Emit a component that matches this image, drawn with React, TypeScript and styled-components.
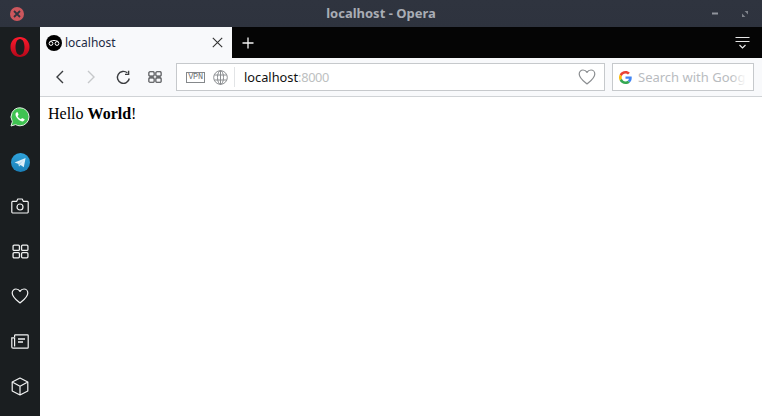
import React from "react";
import styled, { createGlobalStyle } from "styled-components";

const Global = createGlobalStyle`
  html, body { margin: 0; padding: 0; background: #fff; overflow: hidden; }
  #root { width: 762px; height: 416px; }
`;
const Win = styled.div`
  width: 762px; height: 416px; display: flex; flex-direction: column; overflow: hidden;
`;
const TitleBar = styled.header`
  height: 27px; flex: none; display: flex; align-items: center; justify-content: space-between;
  padding: 0 14px 0 10px; background: linear-gradient(#2f343f, #2e333e);
  position: relative;
`;
const TitleText = styled.div`
  position: absolute; left: 0; right: 0; top: 0; height: 27px; text-align: center;
  font: bold 13px/27px "Noto Sans", sans-serif; color: #a9adb5;
`;
const CloseDot = styled.div`
  width: 14px; height: 14px; border-radius: 50%; background: #cc575d; display: flex; align-items: center; justify-content: center;
`;
const WinButtons = styled.div`
  display: flex; gap: 24px; align-items: center;
`;
const Main = styled.div`
  flex: 1; display: flex; min-height: 0;
`;
const Side = styled.aside`
  width: 40px; flex: none; background: #1a1e20; display: flex; flex-direction: column; align-items: center;
  padding-top: 9px;
`;
const SideSlot = styled.div<{ $mt?: number }>`
  width: 40px; height: 22px; display: flex; align-items: center; justify-content: center; margin-top: ${p => p.$mt ?? 0}px;
`;
const Content = styled.div`
  flex: 1; display: flex; flex-direction: column; min-width: 0;
`;
const TabStrip = styled.div`
  height: 31px; flex: none; background: #050505; display: flex; align-items: stretch;
`;
const Tab = styled.div`
  width: 192px; background: #f8f9fb; display: flex; align-items: center; padding: 0 9px 0 6px; box-sizing: border-box;
`;
const Favicon = styled.div`
  width: 16px; height: 16px; border-radius: 50%; background: #000; display: flex; align-items: center; justify-content: center; flex: none;
`;
const TabLabel = styled.span`
  font: 12px "Noto Sans", sans-serif; color: #1d2a44; margin-left: 3px; flex: 1;
`;
const NewTab = styled.div`
  width: 32px; display: flex; align-items: center; justify-content: center;
`;
const StripEnd = styled.div`
  margin-left: auto; width: 40px; display: flex; align-items: center; justify-content: center;
`;
const Toolbar = styled.div`
  height: 38px; flex: none; background: #f8f9fb; border-bottom: 1px solid #d0d3d6;
  display: flex; align-items: center; padding-left: 9px; padding-right: 8px;
`;
const NavGroup = styled.div`
  display: flex; gap: 12px; align-items: center; flex: none; margin-right: 1px;
`;
const NavBtn = styled.div`
  width: 20px; height: 20px; display: flex; align-items: center; justify-content: center; flex: none;
`;
const AddressBar = styled.div`
  width: 429px; height: 28px; box-sizing: border-box; background: #fff; border: 1px solid #c6c9cc; display: flex; align-items: center;
  margin-left: 10px; padding: 0 8px 0 9px; flex: none;
`;
const VpnBadge = styled.span`
  width: 19px; height: 11px; box-sizing: border-box; border: 1px solid #85888b; flex: none;
  display: flex; align-items: center; justify-content: center;
  font: 8.5px/9px "Liberation Mono", monospace; letter-spacing: -0.3px; color: #6f7275;
`;
const GlobeWrap = styled.span`
  margin-left: 8px; flex: none; display: flex;
`;
const Divider = styled.div`
  width: 1px; height: 20px; background: #e2e4e6; margin: 0 8px 0 6px;
`;
const Url = styled.div`
  flex: 1; font: 12.8px "Noto Sans", sans-serif; color: #111; padding-left: 1px;
  span { color: #bdbfc1; letter-spacing: -0.35px; }
`;
const SearchBox = styled.div`
  width: 142px; height: 28px; box-sizing: border-box; margin-left: 7px; background: #fff; border: 1px solid #c6c9cc; display: flex; align-items: center;
  padding-left: 6px; overflow: hidden; position: relative;
`;
const GoogleWrap = styled.span`
  flex: none; display: flex;
`;
const SearchText = styled.span`
  font: 13px "Noto Sans", sans-serif; color: #b9bcbf; margin-left: 6px; white-space: nowrap;
`;
const Fade = styled.div`
  position: absolute; right: 0; top: 0; bottom: 0; width: 22px; background: linear-gradient(to right, rgba(255,255,255,0), #fff 70%);
`;
const Page = styled.main`
  flex: 1; background: #fff; padding: 8px; font: 16px "Liberation Serif", serif; color: #000;
  line-height: 18px;
`;

const Grid = ({ c, s = 16, w = 1.3 }: { c: string; s?: number; w?: number }) => (
  <svg width={s} height={s} viewBox="0 0 16 16" fill="none" stroke={c} strokeWidth={w}>
    <rect x="1" y="2" width="6" height="5" rx="1" />
    <rect x="9" y="2" width="6" height="5" rx="1" />
    <rect x="1" y="9" width="6" height="5" rx="1" />
    <rect x="9" y="9" width="6" height="5" rx="1" />
  </svg>
);
const Heart = ({ c, s = 18 }: { c: string; s?: number }) => (
  <svg width={s} height={s} viewBox="0 0 18 18" fill="none" stroke={c} strokeWidth="1.2" strokeLinejoin="round">
    <path d="M9 16 C6 13.5 1.2 10.2 1.2 6 C1.2 3.6 3 2 5 2 C6.8 2 8.2 3 9 4.4 C9.8 3 11.2 2 13 2 C15 2 16.8 3.6 16.8 6 C16.8 10.2 12 13.5 9 16 Z" />
  </svg>
);

export default function App() {
  return (
    <Win>
      <Global />
      <TitleBar>
        <TitleText>localhost - Opera</TitleText>
        <CloseDot>
          <svg width="8" height="8" viewBox="0 0 8 8" stroke="#2f343f" strokeWidth="1.8"><path d="M1 1 L7 7 M7 1 L1 7" /></svg>
        </CloseDot>
        <WinButtons>
          <svg width="6" height="3" viewBox="0 0 6 3"><rect width="6" height="2" y="0.5" fill="#90949c" /></svg>
          <svg width="6" height="6" viewBox="0 0 6 6" fill="#7f838b"><path d="M2.6 0 H6 V3.4 Z M0 2.6 L3.4 6 H0 Z" /></svg>
        </WinButtons>
      </TitleBar>
      <Main>
        <Side>
          <SideSlot>
            <svg width="20" height="22" viewBox="0 0 20 22">
              <defs><linearGradient id="op" x1="0" y1="0" x2="0" y2="1"><stop offset="0" stopColor="#ff1b2d" /><stop offset="1" stopColor="#b3081a" /></linearGradient></defs>
              <path fillRule="evenodd" fill="url(#op)" d="M10 1 C15 1 19.5 5 19.5 11 C19.5 17 15 21 10 21 C4.5 21 .5 17 .5 11 C.5 5 4.5 1 10 1 Z M10 3 C7.2 3 5.5 6.600 5.5 11 C5.5 15.400 7.200 19 10 19 C12.800 19 14.500 15.400 14.500 11 C14.500 6.600 12.800 3 10 3 Z" />
            </svg>
          </SideSlot>
          <SideSlot $mt={48}>
            <svg width="20" height="20" viewBox="0 0 20 20">
              <path fill="#3fc351" stroke="#e4efe4" strokeWidth="1" d="M10 .8 A9 9 0 0 1 10 18.8 A9 9 0 0 1 5.6 17.6 L1 19 L2.4 14.6 A9 9 0 0 1 10 .8 Z" />
              <path fill="#fff" d="M7 5.2 C6.2 5.4 5.4 6.4 5.5 7.6 C5.8 10.6 9 13.8 12.2 14.4 C13.4 14.5 14.4 13.7 14.6 12.8 C14.7 12.3 14.5 12.1 14.2 12 L12.5 11.2 C12.1 11 11.9 11.2 11.7 11.4 L11.1 12.1 C10.9 12.3 10.7 12.3 10.4 12.1 C9.2 11.5 8.3 10.6 7.7 9.4 C7.6 9.2 7.6 9 7.8 8.8 L8.4 8.1 C8.6 7.9 8.6 7.7 8.5 7.4 L7.8 5.6 C7.6 5.2 7.4 5.1 7 5.2 Z" />
            </svg>
          </SideSlot>
          <SideSlot $mt={23}>
            <svg width="19" height="19" viewBox="0 0 19 19">
              <defs><linearGradient id="tg" x1="0" y1="0" x2="0" y2="1"><stop offset="0" stopColor="#2fa3db" /><stop offset="1" stopColor="#1a7fb8" /></linearGradient></defs>
              <circle cx="9.5" cy="9.5" r="9.5" fill="url(#tg)" />
              <path fill="#dceef8" d="M3.6 9.4 L14.6 5 L12.8 14.2 L9.6 11.9 L8 13.4 L7.6 11 Z" />
              <path fill="#a9d2e8" d="M7.6 11 L12.6 7 L9 11.2 L8 13.4 Z" />
            </svg>
          </SideSlot>
          <SideSlot $mt={22}>
            <svg width="18" height="16" viewBox="0 0 18 16" fill="none" stroke="#f2f3f3" strokeWidth="1.2" strokeLinejoin="round">
              <path d="M1.6 3.4 H5.6 L6.8 1 H11.2 L12.4 3.4 H16.4 A1 1 0 0 1 17.2 4.2 V14.2 A1 1 0 0 1 16.4 15 H1.6 A1 1 0 0 1 .8 14.2 V4.2 A1 1 0 0 1 1.6 3.4 Z" />
              <circle cx="9" cy="9" r="3" />
            </svg>
          </SideSlot>
          <SideSlot $mt={23}>
            <Grid c="#eef0f0" s={17} w={1.2} />
          </SideSlot>
          <SideSlot $mt={23}>
            <Heart c="#f2f3f3" />
          </SideSlot>
          <SideSlot $mt={23}>
            <svg width="18" height="15" viewBox="0 0 18 15" fill="none" stroke="#f2f3f3" strokeWidth="1.2">
              <path d="M3.6 3 V1.6 A.8 .8 0 0 1 4.4 .8 H16.4 A.8 .8 0 0 1 17.2 1.6 V13.4 A.8 .8 0 0 1 16.4 14.2 H2 A1.2 1.2 0 0 1 .8 13 V3.8 H3.6 V12.6" />
              <path d="M7 5 H14 M7 8 H12" strokeWidth="1.3" />
            </svg>
          </SideSlot>
          <SideSlot $mt={23}>
            <svg width="18" height="19" viewBox="0 0 18 19" fill="none" stroke="#f2f3f3" strokeWidth="1.2" strokeLinejoin="round">
              <path d="M9 1 L16.8 5 V14 L9 18 L1.2 14 V5 Z M1.2 5 L9 9.2 L16.8 5 M9 9.2 V18" />
            </svg>
          </SideSlot>
        </Side>
        <Content>
          <TabStrip>
            <Tab>
              <Favicon>
                <svg width="12" height="7" viewBox="0 0 12 7" fill="none" stroke="#fff" strokeWidth="1">
                  <circle cx="3" cy="4.5" r="1.9" /><circle cx="9" cy="4.5" r="1.9" /><path d="M1.5 3 C3 1 9 1 10.5 3" />
                </svg>
              </Favicon>
              <TabLabel>localhost</TabLabel>
              <svg width="11" height="11" viewBox="0 0 11 11" stroke="#333" strokeWidth="1.1"><path d="M.8 .8 L10.2 10.2 M10.2 .8 L.8 10.2" /></svg>
            </Tab>
            <NewTab>
              <svg width="12" height="12" viewBox="0 0 12 12" stroke="#f4f4f4" strokeWidth="1.3"><path d="M6 .5 V11.5 M.5 6 H11.5" /></svg>
            </NewTab>
            <StripEnd>
              <svg width="15" height="14" viewBox="0 0 15 14" fill="none" stroke="#e8e8e8" strokeWidth="1">
                <path d="M.5 1.5 H14.5 M.5 5.5 H14.5" />
                <path d="M4.5 9 L7.5 12 L10.5 9" strokeWidth="1.2" />
              </svg>
            </StripEnd>
          </TabStrip>
          <Toolbar>
            <NavGroup>
              <NavBtn>
                <svg width="9" height="14" viewBox="0 0 9 14" fill="none" stroke="#3a3c3f" strokeWidth="1.4"><path d="M8 1 L2 7 L8 13" /></svg>
              </NavBtn>
              <NavBtn>
                <svg width="9" height="14" viewBox="0 0 9 14" fill="none" stroke="#c6c8ca" strokeWidth="1.4"><path d="M1 1 L7 7 L1 13" /></svg>
              </NavBtn>
              <NavBtn>
                <svg width="15" height="15" viewBox="0 0 15 15" fill="none" stroke="#3a3c3f" strokeWidth="1.4">
                  <path d="M13.3 8.5 A6 6 0 1 1 11.3 2.8" />
                  <path d="M12.6 .8 V4.4 H9" strokeLinejoin="miter" />
                </svg>
              </NavBtn>
              <NavBtn>
                <Grid c="#3a3c3f" s={14} w={1.2} />
              </NavBtn>
            </NavGroup>
            <AddressBar>
              <VpnBadge>VPN</VpnBadge>
              <GlobeWrap>
                <svg width="15" height="15" viewBox="0 0 15 15" fill="none" stroke="#8a8d90" strokeWidth="1">
                  <circle cx="7.5" cy="7.5" r="6.8" />
                  <ellipse cx="7.5" cy="7.5" rx="3" ry="6.8" />
                  <path d="M1.5 5 H13.5 M1.5 10 H13.5 M7.5 .7 V14.3" />
                </svg>
              </GlobeWrap>
              <Divider />
              <Url>localhost<span>:8000</span></Url>
              <Heart c="#8a8d90" s={18} />
            </AddressBar>
            <SearchBox>
              <GoogleWrap>
                <svg width="13" height="13" viewBox="0 0 48 48">
                  <path fill="#EA4335" d="M24 9.5c3.5 0 6.7 1.2 9.2 3.6l6.9-6.9C35.9 2.4 30.5 0 24 0 14.6 0 6.5 5.4 2.6 13.2l8 6.2C12.5 13.7 17.8 9.5 24 9.5z" />
                  <path fill="#4285F4" d="M47 24.5c0-1.6-.1-3.1-.4-4.5H24v9h12.9c-.6 3-2.2 5.5-4.7 7.2l7.7 6C44.4 38 47 31.8 47 24.5z" />
                  <path fill="#FBBC05" d="M10.6 28.6c-.5-1.4-.8-3-.8-4.6s.3-3.2.8-4.6l-8-6.2C.9 16.5 0 20.1 0 24s.9 7.500 2.6 10.800l8-6.200z" />
                  <path fill="#34A853" d="M24 48c6.500 0 11.900-2.100 15.900-5.800l-7.700-6c-2.100 1.400-4.900 2.300-8.200 2.300-6.200 0-11.500-4.200-13.400-9.900l-8 6.200C6.500 42.600 14.600 48 24 48z" />
                </svg>
              </GoogleWrap>
              <SearchText>Search with Google</SearchText>
              <Fade />
            </SearchBox>
          </Toolbar>
          <Page>Hello <b>World</b>!</Page>
        </Content>
      </Main>
    </Win>
  );
}
